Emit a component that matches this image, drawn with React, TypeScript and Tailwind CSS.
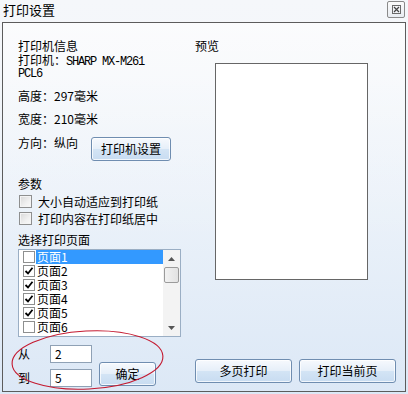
import React from "react";

const FONT = { fontFamily: '"Noto Sans CJK SC", "Noto Sans", sans-serif' };
const MONO = { fontFamily: '"Liberation Mono", monospace' };

function Btn({ children, className }: { children: React.ReactNode; className: string }) {
  return (
    <div
      className={
        "flex items-center justify-center rounded-[3px] border border-[#6f8db0] bg-[linear-gradient(180deg,#f6f9fd_0%,#e6eff9_48%,#d3e4f5_52%,#c8dcf1_100%)] shadow-[inset_0_0_0_1px_rgba(255,255,255,0.75)] text-[12px] leading-[16px] text-black " +
        className
      }
    >
      {children}
    </div>
  );
}

function Check({ checked }: { checked: boolean }) {
  return (
    <div className="w-[12px] h-[12px] border border-[#8e8f8f] bg-white flex items-center justify-center shrink-0">
      {checked && (
        <svg width="10" height="10" viewBox="0 0 10 10">
          <path d="M1.5 5 L4 7.5 L8.5 1.8" stroke="#000" strokeWidth="1.8" fill="none" />
        </svg>
      )}
    </div>
  );
}

function BigCheck() {
  return (
    <div className="w-[13px] h-[13px] border border-[#8e8f8f] bg-[linear-gradient(135deg,#d8d8d8_0%,#f0f0f0_60%,#fafafa_100%)] shadow-[inset_0_0_0_1px_#f4f4f4] shrink-0" />
  );
}

export default function App() {
  const pages = [
    { n: "页面1", c: false, sel: true },
    { n: "页面2", c: true },
    { n: "页面3", c: true },
    { n: "页面4", c: true },
    { n: "页面5", c: true },
    { n: "页面6", c: false },
  ];
  return (
    <div
      className="relative w-[408px] h-[394px] overflow-hidden text-black bg-[linear-gradient(180deg,#f5f7fa_0%,#f3f6fa_20%,#eaf1f9_55%,#dce8f6_100%)]"
      style={FONT}
    >
      {/* title bar */}
      <div className="h-[22px] flex items-start justify-between pl-[3px] pr-[3px]">
        <span className="text-[13px] leading-[16px] mt-[2px]">打印设置</span>
        <div className="mt-[1px] w-[18px] h-[17px] rounded-[2px] border border-[#8a8a8a] bg-[linear-gradient(180deg,#fbfbfb,#e9edf2)] flex items-center justify-center">
          <svg width="9" height="9" viewBox="0 0 9 9">
            <rect x="0.5" y="0.5" width="8" height="8" fill="none" stroke="#6a6a6a" />
            <path d="M2 2 L7 7 M7 2 L2 7" stroke="#444" strokeWidth="1.2" />
          </svg>
        </div>
      </div>

      {/* panel */}
      <div className="ml-[2px] w-[404px] h-[370px] border border-[#5c5c5c] flex bg-[linear-gradient(180deg,rgba(255,255,255,0.6)_0%,rgba(255,255,255,0.2)_30%,rgba(255,255,255,0)_60%)]">
        {/* left column */}
        <div className="pl-[15px] w-[177px] shrink-0 flex flex-col pt-[15px]">
          <div className="text-[12px] leading-[16px]">打印机信息</div>
          <div className="text-[12px] leading-[12px] whitespace-nowrap">
            打印机：
            <span className="text-[12px] tracking-[-1.2px]" style={MONO}>
              SHARP MX-M261
            </span>
          </div>
          <div className="text-[12px] leading-[12px] tracking-[-1.2px]" style={MONO}>
            PCL6
          </div>
          <div className="text-[12px] leading-[16px] mt-[8px]">高度：297毫米</div>
          <div className="text-[12px] leading-[16px] mt-[7px]">宽度：210毫米</div>
          <div className="flex items-start mt-[8px] h-[26px]">
            <div className="w-[73px] text-[12px] leading-[16px]">方向：纵向</div>
            <Btn className="mt-[2px] w-[80px] h-[24px]">打印机设置</Btn>
          </div>
          <div className="text-[12px] leading-[16px] mt-[15px]">参数</div>
          <div className="mt-[1px] h-[17px] flex items-center">
            <div className="ml-[1px]">
              <BigCheck />
            </div>
            <span className="ml-[6px] text-[12px] leading-[16px]">大小自动适应到打印纸</span>
          </div>
          <div className="h-[17px] flex items-center">
            <div className="ml-[1px]">
              <BigCheck />
            </div>
            <span className="ml-[6px] text-[12px] leading-[16px]">打印内容在打印纸居中</span>
          </div>
          <div className="text-[12px] leading-[16px] mt-[5px]">选择打印页面</div>
          {/* listbox */}
          <div className="mt-[1px] w-[163px] h-[88px] border border-[#9aaec4] bg-white flex">
            <div className="flex-1 flex flex-col">
              {pages.map((p) => (
                <div key={p.n} className="h-[14px] flex items-center">
                  <div className="ml-[4px]">
                    <Check checked={p.c} />
                  </div>
                  <div
                    className={
                      "ml-[1px] flex-1 h-[14px] pl-[1px] text-[12px] leading-[14px] " +
                      (p.sel ? "bg-[#3399ff] text-white" : "")
                    }
                  >
                    {p.n}
                  </div>
                </div>
              ))}
            </div>
            <div className="w-[17px] h-full bg-[#f3f3f3] flex flex-col">
              <div className="h-[17px] flex items-center justify-center">
                <svg width="7" height="4" viewBox="0 0 7 4">
                  <path d="M0 4 L3.5 0 L7 4 Z" fill="#555" />
                </svg>
              </div>
              <div className="h-[16px] mx-[1px] rounded-[2px] border border-[#9b9b9b] bg-[linear-gradient(90deg,#f2f2f2,#e2e2e2)]" />
              <div className="flex-1" />
              <div className="h-[17px] flex items-center justify-center">
                <svg width="7" height="4" viewBox="0 0 7 4">
                  <path d="M0 0 L7 0 L3.5 4 Z" fill="#555" />
                </svg>
              </div>
            </div>
          </div>
          {/* from/to */}
          <div className="mt-[8px] flex items-end">
            <div className="flex flex-col gap-[6px]">
              <div className="flex items-center h-[18px]">
                <span className="w-[32px] text-[12px] leading-[16px]">从</span>
                <div className="w-[42px] h-[18px] border border-[#8fa1b5] bg-white pl-[4px] text-[12px] leading-[16px]">
                  2
                </div>
              </div>
              <div className="flex items-center h-[18px]">
                <span className="w-[32px] text-[12px] leading-[16px]">到</span>
                <div className="w-[42px] h-[18px] border border-[#8fa1b5] bg-white pl-[4px] text-[12px] leading-[16px]">
                  5
                </div>
              </div>
            </div>
            <Btn className="ml-[7px] mb-[1px] w-[57px] h-[24px]">确定</Btn>
          </div>
        </div>

        {/* right column */}
        <div className="ml-[15px] flex flex-col pt-[15px]">
          <div className="text-[12px] leading-[16px]">预览</div>
          <div className="mt-[9px] ml-[20px] w-[153px] h-[217px] border border-[#666] bg-white" />
          <div className="mt-[79px] flex gap-[7px]">
            <Btn className="w-[97px] h-[24px]">多页打印</Btn>
            <Btn className="w-[97px] h-[24px]">打印当前页</Btn>
          </div>
        </div>
      </div>

      {/* red annotation ellipse */}
      <svg className="absolute left-0 top-0 pointer-events-none" width="408" height="394" viewBox="0 0 408 394">
        <ellipse
          cx="87.5"
          cy="360"
          rx="75.5"
          ry="29"
          transform="rotate(-3 87.5 360)"
          fill="none"
          stroke="#c41a30"
          strokeWidth="1.1"
        />
      </svg>
    </div>
  );
}
